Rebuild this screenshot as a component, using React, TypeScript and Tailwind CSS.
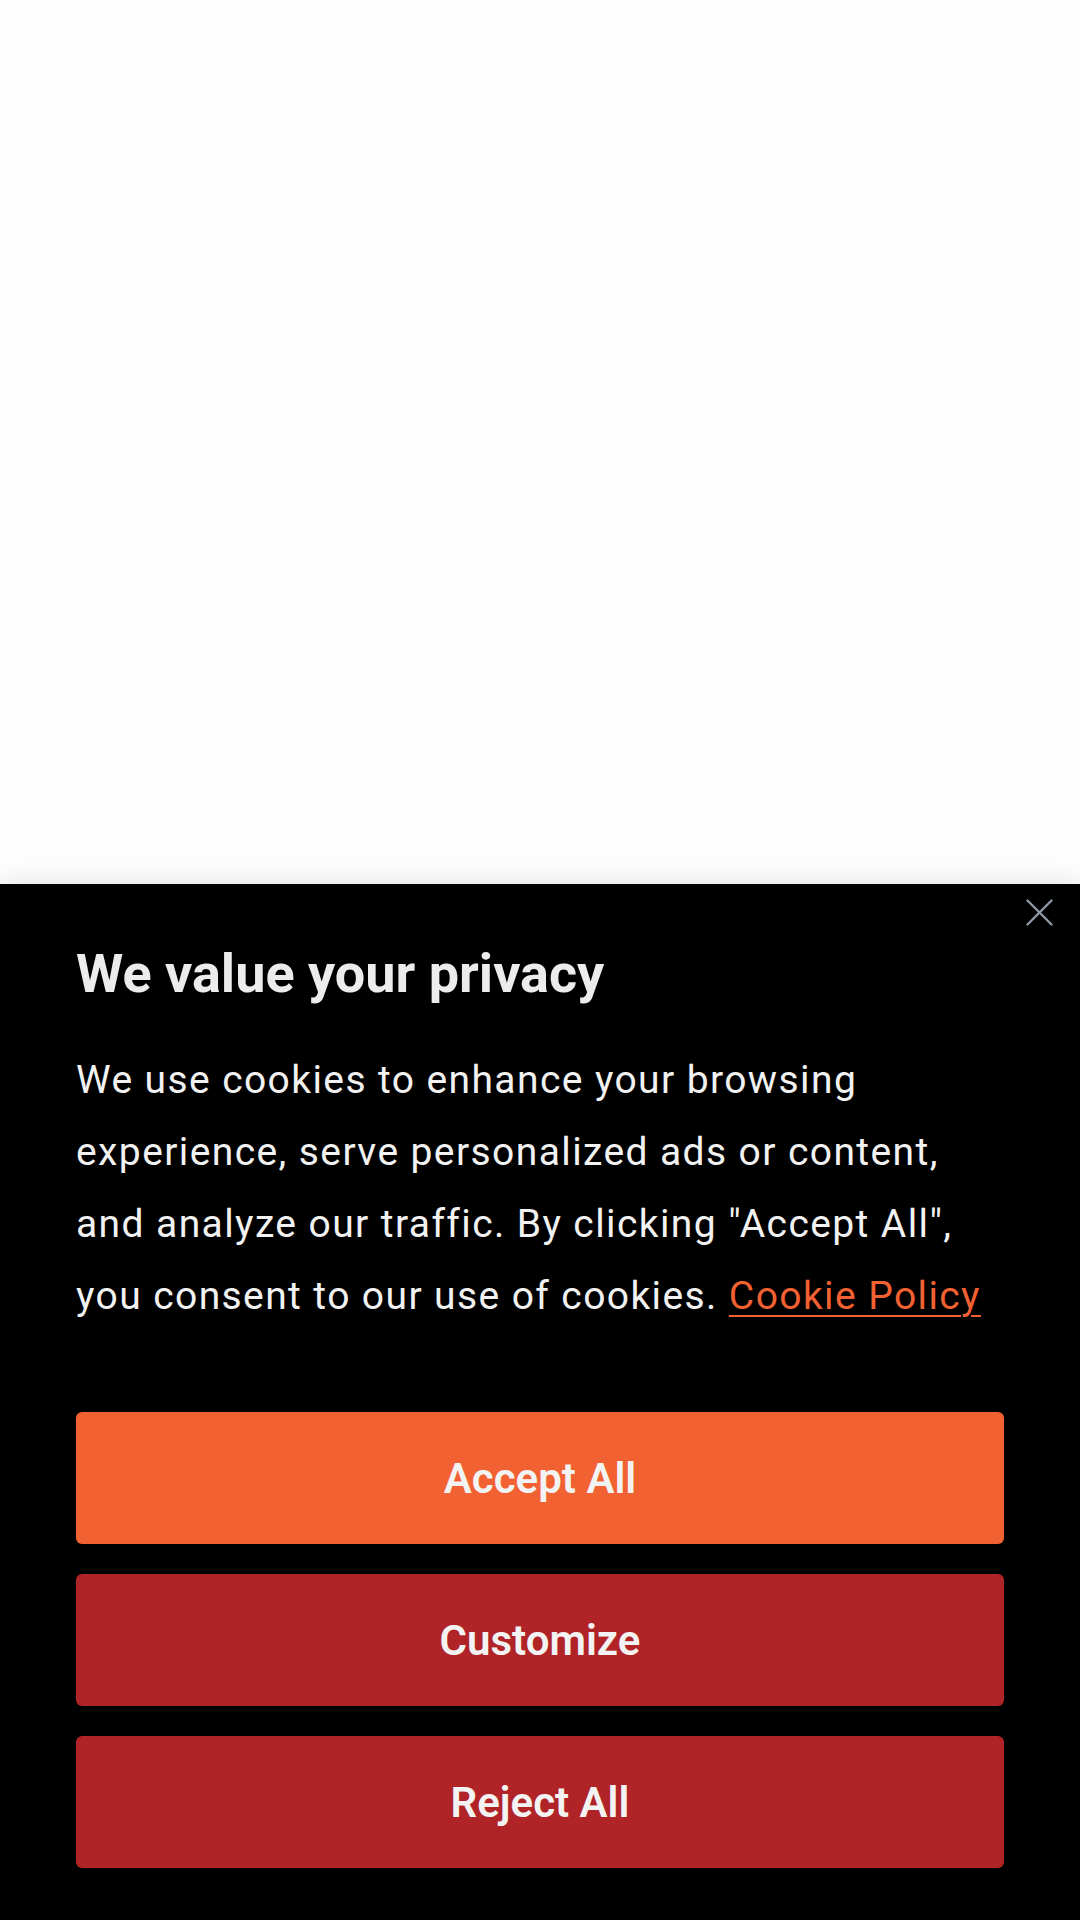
const font = { fontFamily: "Roboto, 'Noto Sans', sans-serif" };

function ConsentButton({ label, tone }: { label: string; tone: "primary" | "secondary" }) {
  const color = tone === "primary" ? "bg-[#f26131]" : "bg-[#b02327]";
  return (
    <button
      className={`${color} h-[132px] w-full rounded-[6px] text-[42px] font-semibold text-[#f3f3f3] flex items-center justify-center`}
    >
      {label}
    </button>
  );
}

export default function App() {
  return (
    <div className="min-h-screen flex flex-col bg-white" style={font}>
      {/* page behind the banner */}
      <div className="flex-grow bg-[#fefefe]"></div>

      {/* cookie banner */}
      <div className="relative bg-black px-[76px] pt-[58px] pb-[52px] shadow-[0_0_28px_rgba(0,0,0,0.12)]">
        <button className="absolute top-[15px] right-[27px] text-[#8e98a6]" aria-label="Close">
          <svg width="27" height="27" viewBox="0 0 27 27" fill="none" stroke="currentColor" strokeWidth="2.4" strokeLinecap="round">
            <path d="M1.5 1.5L25.5 25.5M25.5 1.5L1.5 25.5" />
          </svg>
        </button>

        <h2 className="text-[54px] leading-[64px] font-bold text-[#ececec]">We value your privacy</h2>

        <p className="mt-[38px] text-[39px] leading-[72px] tracking-[1.4px] text-[#f2f2f2]">
          We use cookies to enhance your browsing experience, serve personalized ads or content, and analyze our
          traffic. By clicking "Accept All", you consent to our use of cookies.{" "}
          <a href="#" className="text-[#f26131] underline underline-offset-[6px] decoration-[2px]">
            Cookie Policy
          </a>
        </p>

        <div className="mt-[80px] flex flex-col gap-[30px]">
          <ConsentButton label="Accept All" tone="primary" />
          <ConsentButton label="Customize" tone="secondary" />
          <ConsentButton label="Reject All" tone="secondary" />
        </div>
      </div>
    </div>
  );
}
